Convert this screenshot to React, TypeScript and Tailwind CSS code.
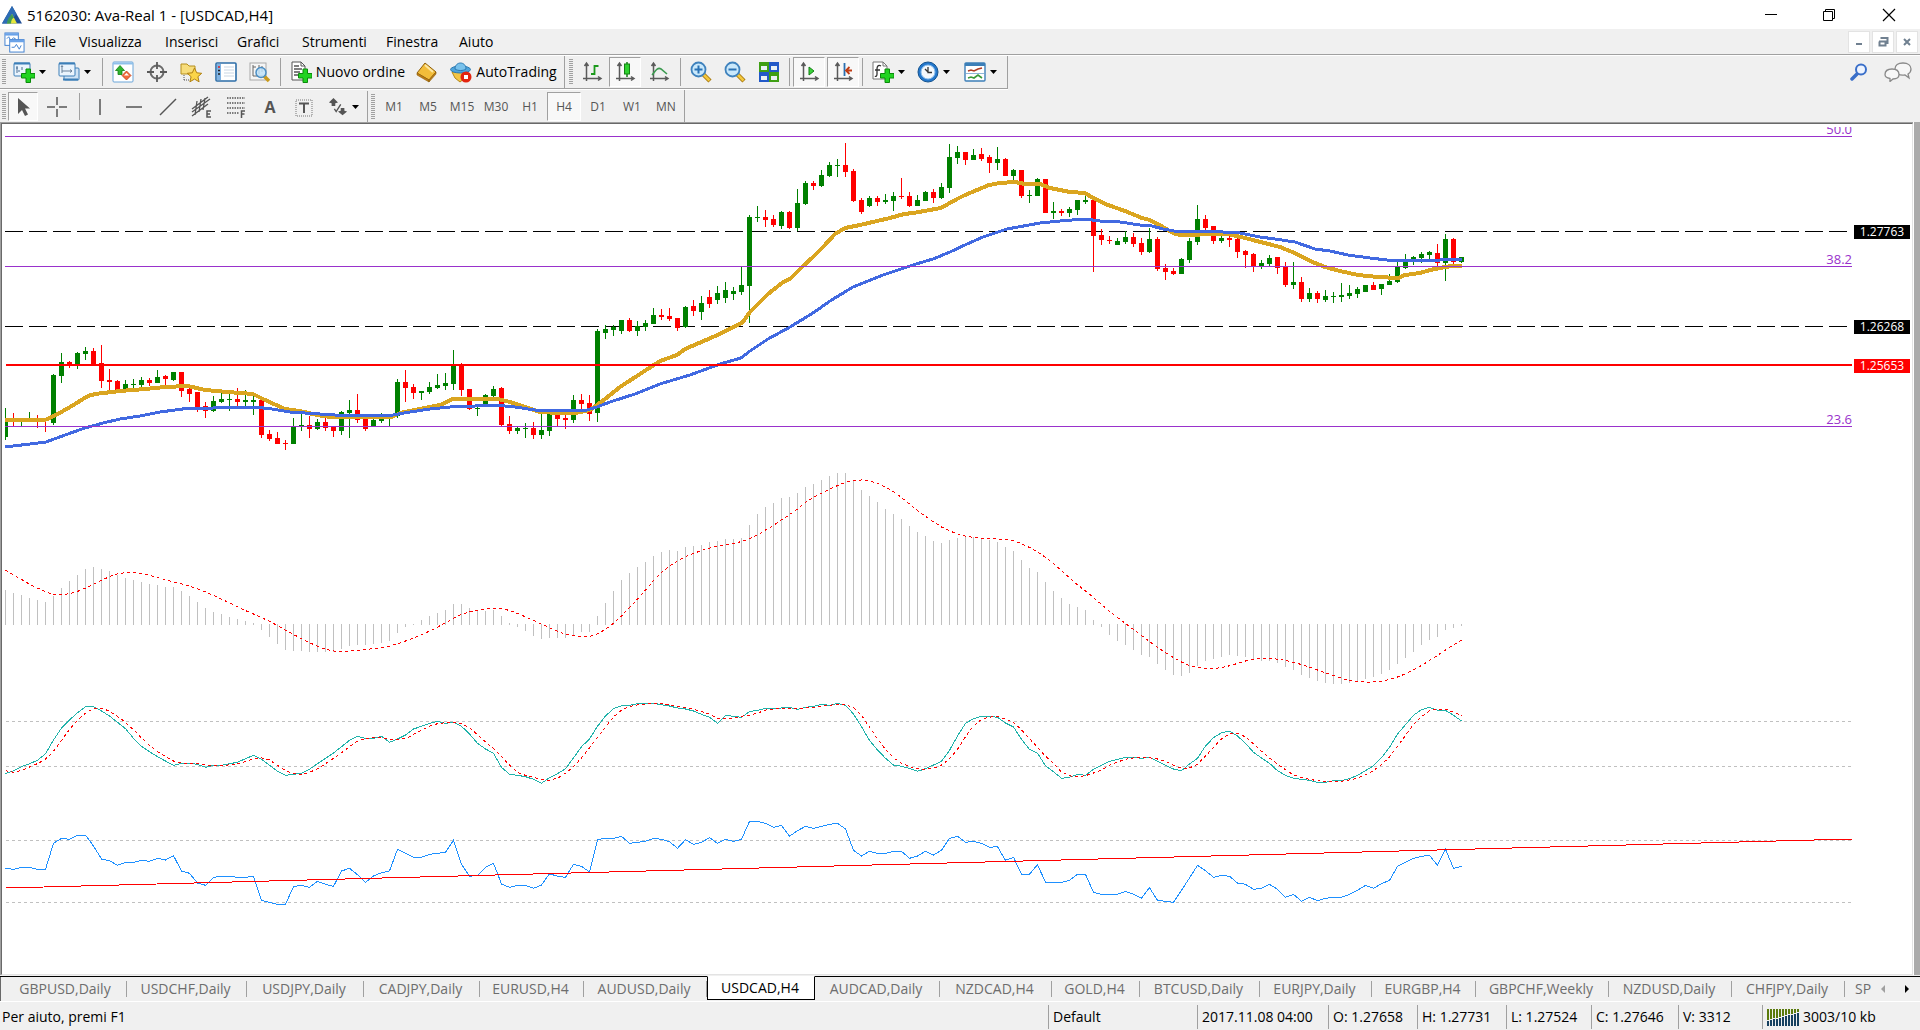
import type { ReactNode } from "react";
import clsx from "clsx";

type Candle = [high: number, top: number, bottom: number, low: number, up: 0 | 1];

const STEP = 8;
const PLOT_LEFT = 5;
const PLOT_TOP = 127;

const candles: Candle[] = [
  [408, 420, 437, 440, 1], [413, 419, 421, 426, 0], [419, 420, 421, 426, 1], [412, 419, 421, 422, 1],
  [415, 419, 421, 428, 0], [418, 420, 421, 432, 0], [374, 375, 423, 425, 1], [353, 362, 376, 383, 1],
  [361, 362, 365, 368, 0], [352, 353, 364, 369, 1], [347, 351, 354, 360, 1], [348, 351, 364, 364, 0],
  [345, 363, 381, 388, 0], [369, 380, 382, 390, 0], [380, 381, 390, 390, 0], [380, 384, 389, 390, 1],
  [379, 384, 385, 388, 1], [377, 380, 385, 387, 1], [378, 380, 383, 386, 0], [370, 377, 383, 383, 1],
  [375, 376, 379, 385, 0], [372, 372, 380, 381, 1], [372, 372, 391, 397, 0], [386, 389, 394, 402, 0],
  [392, 392, 408, 412, 0], [402, 406, 411, 418, 0], [396, 401, 411, 412, 1], [393, 399, 402, 403, 1],
  [393, 399, 400, 411, 1], [388, 399, 402, 406, 0], [390, 400, 402, 406, 1], [396, 400, 402, 415, 1],
  [400, 400, 435, 438, 0], [430, 434, 439, 441, 0], [432, 438, 444, 444, 0], [440, 443, 444, 450, 0],
  [418, 426, 444, 444, 1], [414, 425, 426, 431, 1], [416, 425, 429, 438, 0], [419, 422, 429, 430, 1],
  [416, 422, 428, 431, 0], [426, 427, 431, 437, 0], [411, 412, 431, 435, 1], [400, 410, 413, 438, 1],
  [394, 410, 420, 423, 0], [418, 418, 429, 431, 0], [419, 420, 426, 427, 1], [413, 418, 421, 423, 1],
  [415, 418, 419, 426, 1], [379, 382, 416, 418, 1], [370, 382, 388, 402, 0], [384, 387, 393, 399, 0],
  [391, 391, 393, 400, 1], [382, 387, 392, 394, 1], [374, 385, 388, 389, 1], [373, 383, 386, 390, 1],
  [350, 365, 384, 390, 1], [363, 365, 390, 396, 0], [389, 389, 409, 410, 0], [405, 408, 409, 416, 1],
  [394, 395, 405, 406, 1], [386, 389, 396, 397, 1], [387, 388, 425, 426, 0], [416, 424, 431, 434, 0],
  [426, 428, 431, 434, 1], [423, 428, 429, 438, 1], [422, 428, 435, 439, 0], [414, 430, 435, 439, 1],
  [413, 414, 431, 436, 1], [413, 415, 419, 426, 0], [415, 418, 420, 429, 0], [395, 400, 420, 423, 1],
  [394, 400, 404, 409, 0], [395, 403, 414, 421, 0], [329, 331, 413, 422, 1], [325, 329, 333, 339, 1],
  [325, 327, 330, 336, 1], [320, 320, 331, 334, 1], [318, 320, 331, 332, 0], [321, 326, 331, 336, 1],
  [320, 323, 327, 331, 1], [308, 315, 324, 324, 1], [309, 315, 317, 320, 0], [308, 316, 319, 321, 0],
  [318, 318, 328, 331, 0], [306, 307, 327, 328, 1], [300, 306, 311, 316, 0], [296, 303, 312, 320, 1],
  [290, 297, 304, 308, 0], [286, 293, 300, 304, 1], [282, 290, 298, 303, 1], [287, 291, 294, 300, 1],
  [266, 285, 292, 295, 1], [215, 217, 286, 323, 1], [206, 217, 218, 222, 1], [210, 217, 220, 227, 0],
  [215, 219, 225, 227, 0], [211, 212, 226, 229, 1], [211, 212, 228, 229, 0], [189, 203, 228, 231, 1],
  [181, 183, 204, 205, 1], [181, 183, 186, 190, 0], [170, 175, 186, 187, 1], [162, 165, 176, 177, 1],
  [159, 165, 166, 177, 1], [143, 165, 172, 177, 0], [169, 171, 201, 202, 0], [198, 200, 212, 214, 0],
  [196, 198, 206, 207, 1], [196, 198, 202, 206, 0], [194, 200, 202, 204, 1], [192, 196, 201, 211, 1],
  [178, 196, 197, 199, 0], [192, 196, 206, 207, 0], [195, 200, 206, 206, 1], [191, 192, 201, 201, 1],
  [189, 192, 198, 203, 0], [183, 187, 198, 199, 1], [144, 157, 188, 193, 1], [146, 152, 158, 164, 1],
  [152, 152, 160, 165, 0], [149, 155, 160, 160, 1], [148, 154, 159, 161, 0], [155, 157, 163, 173, 0],
  [147, 159, 163, 170, 1], [158, 159, 176, 176, 0], [169, 170, 176, 180, 1], [170, 170, 196, 198, 0],
  [190, 195, 196, 203, 1], [178, 179, 196, 196, 1], [179, 179, 213, 213, 0], [202, 211, 213, 219, 1],
  [209, 211, 213, 216, 0], [207, 209, 213, 217, 1], [200, 200, 210, 215, 1], [195, 200, 202, 204, 1],
  [200, 200, 236, 272, 0], [229, 235, 240, 245, 0], [236, 240, 241, 244, 0], [238, 241, 245, 245, 1],
  [231, 237, 242, 244, 1], [233, 237, 244, 247, 0], [238, 243, 252, 255, 0], [228, 239, 252, 253, 1],
  [237, 239, 269, 271, 0], [264, 268, 272, 280, 0], [268, 271, 274, 275, 0], [258, 259, 274, 274, 1],
  [238, 241, 260, 263, 1], [205, 219, 242, 245, 1], [215, 219, 228, 230, 0], [226, 226, 241, 244, 0],
  [236, 238, 241, 243, 1], [236, 238, 240, 247, 0], [238, 239, 252, 258, 0], [250, 251, 255, 268, 0],
  [253, 254, 266, 272, 0], [260, 263, 266, 269, 1], [255, 258, 264, 266, 1], [257, 257, 268, 274, 0],
  [262, 266, 285, 287, 0], [262, 282, 285, 289, 1], [277, 282, 299, 302, 0], [288, 293, 299, 302, 1],
  [291, 293, 299, 303, 0], [290, 296, 300, 302, 1], [292, 296, 297, 303, 1], [283, 295, 297, 302, 1],
  [285, 293, 296, 299, 1], [287, 289, 294, 298, 1], [285, 285, 292, 292, 1], [282, 285, 290, 290, 0],
  [284, 284, 289, 295, 1], [274, 281, 285, 285, 1], [262, 266, 282, 283, 1], [254, 262, 268, 269, 1],
  [256, 257, 260, 265, 1], [252, 254, 258, 263, 1], [251, 252, 255, 259, 1], [244, 253, 263, 266, 0],
  [234, 239, 263, 281, 1], [238, 239, 262, 264, 0], [257, 257, 262, 263, 1],
];

const fastMa = [
  [5, 420], [45, 420], [56, 415], [70, 407], [88, 396], [95, 394], [120, 391], [145, 389], [165, 387],
  [188, 386], [205, 390], [228, 392], [253, 394], [265, 400], [285, 409], [300, 411], [317, 415], [330, 417],
  [392, 417], [400, 413], [420, 409], [440, 405], [453, 399], [498, 399], [510, 402], [525, 407], [540, 412],
  [560, 413], [575, 413], [590, 410], [597, 405], [605, 399], [620, 387], [640, 374], [660, 361], [677, 355],
  [685, 349], [713, 337], [742, 323], [750, 312], [768, 294], [782, 283], [791, 278], [802, 267], [813, 257],
  [824, 246], [835, 234], [845, 228], [860, 225], [890, 218], [904, 214], [913, 213], [941, 208], [957, 199],
  [965, 195], [989, 185], [1000, 183], [1015, 182], [1025, 184], [1040, 184], [1050, 188], [1070, 192],
  [1085, 193], [1093, 198], [1108, 205], [1125, 211], [1142, 218], [1150, 220], [1163, 227], [1173, 233],
  [1180, 235], [1195, 235], [1205, 234], [1228, 234], [1245, 238], [1280, 247], [1297, 254], [1310, 261],
  [1325, 267], [1340, 271], [1358, 275], [1378, 277], [1398, 278], [1405, 275], [1420, 273], [1430, 270],
  [1445, 267], [1452, 266], [1462, 266],
];

const slowMa = [
  [5, 447], [30, 444], [46, 442], [65, 435], [85, 428], [103, 423], [120, 419], [140, 416], [160, 412],
  [175, 410], [190, 408], [213, 408], [230, 407], [255, 407], [272, 409], [290, 412], [320, 414], [335, 415],
  [393, 415], [410, 412], [430, 409], [450, 407], [475, 406], [495, 405], [515, 407], [535, 410], [560, 411],
  [587, 410], [597, 407], [610, 402], [635, 394], [660, 384], [690, 375], [720, 364], [741, 358], [750, 351],
  [768, 339], [790, 327], [813, 313], [830, 301], [853, 287], [883, 275], [913, 265], [933, 259], [950, 252],
  [967, 244], [983, 237], [1007, 229], [1040, 223], [1060, 221], [1085, 219], [1100, 221], [1120, 222],
  [1140, 225], [1152, 226], [1163, 229], [1180, 232], [1195, 231], [1205, 231], [1240, 233], [1260, 237],
  [1275, 239], [1295, 242], [1315, 249], [1330, 251], [1348, 255], [1370, 258], [1395, 261], [1415, 260],
  [1440, 260], [1448, 259], [1462, 259],
];

// bars before the first visible one, needed by the signal average
const macdHistory = [71, 67, 64, 57, 53, 50, 39];

const macd = [
  35, 32, 30, 27, 25, 23, 29, 37, 44, 50, 56, 58, 56, 54, 50, 47, 45, 43, 41, 40, 38, 38, 34, 29, 23, 17, 13, 11, 8,
  6, 4, 2, -6, -13, -20, -26, -27, -27, -28, -28, -28, -28, -25, -22, -21, -21, -20, -19, -17, -9, -3, 1, 5, 9, 12,
  15, 21, 21, 17, 14, 14, 15, 9, 2, -3, -7, -12, -15, -14, -14, -14, -11, -8, -8, 9, 22, 34, 45, 52, 58, 63, 69, 73,
  75, 74, 78, 79, 80, 83, 84, 86, 86, 87, 100, 111, 118, 122, 127, 128, 132, 138, 141, 145, 149, 152, 152, 144, 135,
  129, 123, 116, 111, 106, 99, 93, 89, 84, 82, 85, 87, 88, 88, 86, 85, 83, 78, 74, 65, 57, 53, 43, 34, 27, 21, 18,
  15, 5, -3, -11, -17, -21, -26, -31, -33, -40, -46, -51, -52, -49, -42, -37, -35, -33, -31, -32, -33, -35, -37, -37,
  -39, -43, -46, -51, -54, -57, -59, -60, -60, -59, -57, -55, -53, -50, -46, -40, -34, -28, -21, -16, -13, -6, -4, -2,
];

const stochastic = [
  941, 932, 920, 911, 901, 881, 840, 804, 780, 758, 740, 740, 753, 768, 787, 806, 835, 859, 875, 890, 903, 916, 910,
  910, 913, 922, 916, 916, 911, 907, 896, 886, 898, 916, 934, 946, 943, 940, 928, 911, 895, 879, 860, 841, 829, 835,
  835, 829, 847, 837, 825, 807, 799, 790, 784, 790, 787, 799, 822, 850, 867, 880, 922, 943, 946, 950, 958, 970, 953,
  941, 926, 894, 860, 837, 799, 768, 746, 737, 736, 731, 730, 730, 734, 738, 744, 747, 753, 763, 772, 790, 766, 769,
  772, 755, 751, 745, 747, 744, 742, 748, 742, 739, 733, 736, 730, 736, 762, 800, 841, 870, 895, 915, 919, 925, 934,
  926, 915, 904, 871, 828, 790, 776, 769, 769, 772, 789, 801, 838, 868, 880, 917, 935, 955, 952, 943, 946, 928, 916,
  904, 898, 892, 892, 895, 892, 904, 916, 927, 932, 912, 895, 858, 833, 818, 814, 828, 850, 877, 894, 910, 932, 946,
  955, 958, 961, 967, 967, 962, 962, 956, 946, 932, 917, 893, 862, 822, 794, 766, 749, 742, 751, 751, 766, 783,
];

const rsi = [
  1225, 1228, 1222, 1222, 1228, 1228, 1150, 1135, 1138, 1126, 1126, 1158, 1197, 1202, 1216, 1207, 1207, 1201, 1204,
  1195, 1200, 1187, 1233, 1240, 1269, 1276, 1252, 1249, 1249, 1252, 1252, 1249, 1321, 1327, 1333, 1333, 1280, 1276,
  1282, 1264, 1273, 1279, 1233, 1225, 1244, 1267, 1248, 1238, 1233, 1168, 1180, 1192, 1192, 1183, 1180, 1177, 1141,
  1213, 1249, 1246, 1222, 1210, 1272, 1282, 1276, 1276, 1285, 1275, 1241, 1249, 1252, 1213, 1219, 1236, 1139, 1135,
  1135, 1129, 1150, 1147, 1144, 1135, 1138, 1145, 1165, 1139, 1153, 1147, 1133, 1150, 1138, 1144, 1138, 1084, 1084,
  1090, 1102, 1096, 1129, 1112, 1099, 1105, 1099, 1093, 1090, 1107, 1171, 1188, 1174, 1180, 1180, 1174, 1174, 1195,
  1188, 1174, 1185, 1171, 1135, 1129, 1147, 1144, 1150, 1162, 1160, 1201, 1192, 1243, 1243, 1214, 1267, 1267, 1267,
  1261, 1243, 1243, 1297, 1303, 1303, 1303, 1294, 1303, 1315, 1283, 1321, 1324, 1327, 1291, 1254, 1216, 1232, 1252,
  1246, 1249, 1269, 1273, 1288, 1285, 1273, 1288, 1312, 1303, 1324, 1312, 1322, 1315, 1312, 1312, 1303, 1291, 1276,
  1285, 1271, 1261, 1219, 1207, 1195, 1189, 1186, 1216, 1168, 1225, 1219,
];

// simple moving average, one value for every full window
const sma = (values: number[], period: number) =>
  values
    .slice(period - 1)
    .map((_, i) => values.slice(i, i + period).reduce((a, b) => a + b, 0) / period);

const macdSignal = sma([...macdHistory, ...macd], 8);
const stochasticSignal = sma([917, 938, ...stochastic], 3);

const linePoints = (points: number[][]) => points.map(([x, y]) => `${x - PLOT_LEFT},${y}`).join(" ");
const seriesPoints = (values: number[], toY: (v: number) => number) =>
  values.map((v, i) => `${i * STEP + 0.5},${toY(v).toFixed(1)}`).join(" ");
const indicatorY = (v: number) => 460 + v / 3;

const fibLevels = [
  { label: "50.0", y: 136 },
  { label: "38.2", y: 266 },
  { label: "23.6", y: 426 },
];

const priceTags = [
  { price: "1.27763", className: "top-[98px] bg-black" },
  { price: "1.26268", className: "top-[193px] bg-black" },
  { price: "1.25653", className: "top-[232px] bg-[#ff0000]" },
];

const menus = [
  { label: "File", width: "w-[45px]" },
  { label: "Visualizza", width: "w-[86px]" },
  { label: "Inserisci", width: "w-[72px]" },
  { label: "Grafici", width: "w-[65px]" },
  { label: "Strumenti", width: "w-[84px]" },
  { label: "Finestra", width: "w-[73px]" },
  { label: "Aiuto", width: "w-[56px]" },
];

const timeframes = ["M1", "M5", "M15", "M30", "H1", "H4", "D1", "W1", "MN"];

const chartTabs = [
  { label: "GBPUSD,Daily", width: "w-[121px]" },
  { label: "USDCHF,Daily", width: "w-[120px]" },
  { label: "USDJPY,Daily", width: "w-[117px]" },
  { label: "CADJPY,Daily", width: "w-[116px]" },
  { label: "EURUSD,H4", width: "w-[104px]" },
  { label: "AUDUSD,Daily", width: "w-[123px]" },
  { label: "USDCAD,H4", width: "w-[108px]" },
  { label: "AUDCAD,Daily", width: "w-[125px]" },
  { label: "NZDCAD,H4", width: "w-[112px]" },
  { label: "GOLD,H4", width: "w-[88px]" },
  { label: "BTCUSD,Daily", width: "w-[120px]" },
  { label: "EURJPY,Daily", width: "w-[112px]" },
  { label: "EURGBP,H4", width: "w-[104px]" },
  { label: "GBPCHF,Weekly", width: "w-[133px]" },
  { label: "NZDUSD,Daily", width: "w-[123px]" },
  { label: "CHFJPY,Daily", width: "w-[113px]" },
];

const statusCells = [
  { text: "Default", width: "w-[149px]" },
  { text: "2017.11.08 04:00", width: "w-[131px]" },
  { text: "O: 1.27658", width: "w-[89px]" },
  { text: "H: 1.27731", width: "w-[89px]" },
  { text: "L: 1.27524", width: "w-[85px]" },
  { text: "C: 1.27646", width: "w-[87px]" },
  { text: "V: 3312", width: "w-[84px]" },
];

const Icon = ({ children, size = "size-[22px]" }: { children: ReactNode; size?: string }) => (
  <svg viewBox="0 0 22 22" className={clsx("shrink-0", size)} fill="none">
    {children}
  </svg>
);

const Plus = () => (
  <path d="M13 8h4.500v4.500H22V17h-4.500v4.500H13V17H8.500v-4.500H13z" fill="#22d322" stroke="#0b8a0b" />
);

const Axes = () => (
  <path d="M5.500 3v17M2 17.500h17M3.500 5l2-3 2 3M17 15.500l3 2-3 2" stroke="#5a5a5a" strokeWidth="1.500" />
);

const Magnifier = ({ plus }: { plus?: boolean }) => (
  <Icon>
    <path d="M13 13l7 7" stroke="#a87a10" strokeWidth="4.500" />
    <path d="M13 13l6.500 6.500" stroke="#f4c83c" strokeWidth="2.500" />
    <circle cx="8.500" cy="8.500" r="7" fill="#c9e8fb" stroke="#3f82bd" strokeWidth="1.800" />
    <path d={plus ? "M8.500 4.500v8M4.500 8.500h8" : "M4.500 8.500h8"} stroke="#2a72b5" strokeWidth="2" />
  </Icon>
);

const Caret = () => (
  <svg viewBox="0 0 7 4" className="h-1 w-[7px] shrink-0">
    <path d="M0 0h7L3.500 4z" fill="#000" />
  </svg>
);

const Grip = () => (
  <div className="mx-[2px] my-[3px] w-1 shrink-0 bg-[repeating-linear-gradient(to_bottom,#a0a0a0_0_1px,#f0f0f0_1px_2px)]" />
);

const Separator = () => <div className="mx-[3px] my-[2px] w-px shrink-0 bg-[#a0a0a0]" />;

type ToolProps = { label: string; width?: string; active?: boolean; text?: boolean; children: ReactNode };

const Tool = ({ label, width = "w-[34px]", active, text, children }: ToolProps) => (
  <button
    type="button"
    aria-label={text ? undefined : label}
    aria-pressed={active}
    className={clsx(
      "my-px flex shrink-0 items-center justify-center gap-1",
      width,
      active && "border border-t-[#a0a0a0] border-r-white border-b-white border-l-[#a0a0a0] bg-[#f8f8f8]"
    )}
  >
    {children}
  </button>
);

const StandardToolbar = () => (
  <div className="flex h-[33px] w-fit border-r border-b border-[#a0a0a0]">
    <Grip />
    <Tool label="Nuovo grafico" width="w-[42px]">
      <Icon>
        <rect x="1" y="2" width="16" height="13" rx="1" fill="#eaf4fd" stroke="#3c7fb8" />
        <path d="M1 2.500h16" stroke="#3c7fb8" strokeWidth="2" />
        <path d="M4 5v7M3 7h2M5 10h2M9 6v3" stroke="#4a6f92" />
        <Plus />
      </Icon>
      <Caret />
    </Tool>
    <Tool label="Profili" width="w-[49px]">
      <Icon>
        <rect x="6" y="7" width="15" height="12" rx="1" fill="#cfe3f5" stroke="#3c7fb8" />
        <rect x="1" y="2" width="16" height="13" rx="1" fill="#eaf4fd" stroke="#3c7fb8" />
        <path d="M1 2.500h16" stroke="#3c7fb8" strokeWidth="2" />
        <path d="M4 5v7M4 10h10M5 6l-1-1.500L3 6M12 8.500l2 1.500-2 1.500" stroke="#6a8199" />
        <path d="M5 18.500h15" stroke="#3c7fb8" strokeWidth="2" />
      </Icon>
      <Caret />
    </Tool>
    <Separator />
    <Tool label="Market Watch">
      <Icon>
        <rect x="1" y="1" width="20" height="20" rx="1" fill="#fff" stroke="#6aa5d8" />
        <path d="M1 2.500h20" stroke="#8ec0ea" strokeWidth="2" />
        <path d="M8 4.500l4.500 5H10v4H6v-4H3.500z" fill="#2fb52f" stroke="#138013" strokeWidth=".8" />
        <path d="M14.500 10l4.500 4.500-4.500 4.500-4.500-4.500z" fill="#f26a3c" stroke="#c03c14" strokeWidth=".8" />
        <path d="M14.500 12l2.500 2.500h-5z" fill="#fff" />
      </Icon>
    </Tool>
    <Tool label="Finestra dati">
      <Icon>
        <circle cx="11" cy="11" r="6.500" stroke="#6b6b6b" strokeWidth="2" />
        <path d="M11 1v7M11 14v7M1 11h7M14 11h7" stroke="#5a5a5a" strokeWidth="1.800" />
      </Icon>
    </Tool>
    <Tool label="Navigatore">
      <Icon>
        <path d="M1 3h6l2 2h6v8H1z" fill="#f7dd7c" stroke="#b58f1e" />
        <path d="M4 14v6M4 19h5" stroke="#555" strokeDasharray="1 1" />
        <path d="M14.500 7l2.200 4.800 5 .5-3.800 3.400 1.200 5.100-4.600-2.700-4.600 2.700 1.200-5.100-3.800-3.400 5-.5z" fill="#fbd549" stroke="#b08010" />
      </Icon>
    </Tool>
    <Tool label="Terminale" width="w-[35px]">
      <Icon>
        <rect x="1" y="2" width="20" height="18" rx="1" fill="#fff" stroke="#2d6ea8" strokeWidth="1.600" />
        <rect x="2" y="3" width="4" height="16" fill="#7fb2e2" />
        <path d="M9 6h10M9 9h10M9 12h10M9 15h10" stroke="#c9d6e3" />
        <path d="M3 6h2" stroke="#e02020" strokeWidth="1.500" />
        <path d="M3 9.500h2M3 13h2" stroke="#222" strokeWidth="1.500" />
      </Icon>
    </Tool>
    <Tool label="Tester strategia">
      <Icon>
        <rect x="1" y="2" width="16" height="17" fill="#f5f5f5" stroke="#a8a8a8" />
        <path d="M4 4v11M4 6h3M10 4v9M13 5v6M4 15h10" stroke="#666" />
        <path d="M15 15l5 5" stroke="#c99a1d" strokeWidth="3.500" />
        <circle cx="12" cy="11.500" r="5" fill="#bfe2f8" fillOpacity=".85" stroke="#4b8ec4" strokeWidth="1.500" />
      </Icon>
    </Tool>
    <Separator />
    <Tool label="Nuovo ordine" width="w-[127px]" text>
      <Icon>
        <path d="M2 1h9l4 4v14H2z" fill="#fff" stroke="#555" />
        <path d="M11 1v4h4" stroke="#555" />
        <path d="M4 5h5M4 8h8M4 11h6M4 14h4" stroke="#555" strokeWidth="1.500" />
        <Plus />
      </Icon>
      <span>Nuovo ordine</span>
    </Tool>
    <Tool label="MetaEditor" width="w-[32px]">
      <Icon>
        <path d="M9 2l11 9-7 8L1 12z" fill="#f2bd3a" stroke="#8f5f0c" />
        <path d="M1 12l12 7v2L1 14zM13 19l7-8v2l-7 8z" fill="#c07e14" stroke="#8f5f0c" strokeWidth=".6" />
        <path d="M9 4l8 7" stroke="#fde7a2" strokeWidth="2" />
      </Icon>
    </Tool>
    <Tool label="AutoTrading" width="w-[121px]" text>
      <Icon>
        <path d="M2 11h16l-3 6-5 4-5-4z" fill="#f3c545" stroke="#b38618" />
        <ellipse cx="10.500" cy="8.500" rx="10" ry="3.500" fill="#4da4dc" stroke="#2c79b0" />
        <path d="M5 8c0-8 11-8 11 0-3 2-8 2-11 0z" fill="#79c2ec" stroke="#2c79b0" />
        <circle cx="16" cy="16" r="5.500" fill="#e3250f" />
        <rect x="14" y="14" width="4" height="4" fill="#fff" />
      </Icon>
      <span>AutoTrading</span>
    </Tool>
    <div className="w-px bg-[#a0a0a0]" />
    <div className="w-[2px]" />
    <Grip />
    <Tool label="Grafico a barre">
      <Icon>
        <Axes />
        <path d="M13.500 4v10M13.500 5h4M10 13h3.500" stroke="#1c9a1c" strokeWidth="1.800" />
      </Icon>
    </Tool>
    <Tool label="Grafico a candele" width="w-[32px]" active>
      <Icon>
        <Axes />
        <path d="M13 1v15" stroke="#138013" strokeWidth="1.500" />
        <rect x="10.500" y="3" width="5" height="10" fill="#2fd32f" stroke="#138013" />
      </Icon>
    </Tool>
    <Tool label="Grafico a linea" width="w-[36px]">
      <Icon>
        <Axes />
        <path d="M4 14c4-5 6-8 9-6l6 5" stroke="#3c9a50" strokeWidth="1.600" />
      </Icon>
    </Tool>
    <Separator />
    <Tool label="Ingrandisci">
      <Magnifier plus />
    </Tool>
    <Tool label="Riduci">
      <Magnifier />
    </Tool>
    <Tool label="Affianca finestre">
      <Icon>
        <path d="M1 1h10v10H1zM11 11h10v10H11z" fill="#3f9f14" />
        <path d="M11 1h10v10H11zM1 11h10v10H1z" fill="#2259c8" />
        <path d="M3 5h6v4H3zM13 5h6v4h-6zM3 15h6v4H3zM13 15h6v4h-6z" fill="#e9f2f5" />
      </Icon>
    </Tool>
    <Separator />
    <Tool label="Scorrimento automatico" width="w-[32px]" active>
      <Icon>
        <Axes />
        <path d="M11 6v8l5-4z" fill="#3bd33b" stroke="#138013" />
      </Icon>
    </Tool>
    <div className="w-[2px]" />
    <Tool label="Spostamento grafico" width="w-[32px]" active>
      <Icon>
        <Axes />
        <path d="M12.500 2v13" stroke="#2a6fb0" strokeWidth="1.800" />
        <path d="M14 9.500h6M17.500 6L14 9.500l3.500 3.500" stroke="#c03c14" strokeWidth="1.800" />
      </Icon>
    </Tool>
    <Separator />
    <Tool label="Indicatori" width="w-[44px]">
      <Icon>
        <path d="M1 1h10l4 4v13H1z" fill="#fff" stroke="#777" />
        <path d="M11 1v4h4" stroke="#777" />
        <path d="M9 5c-3-2-4 1-4 3v5c0 2-1 3-2 2M3 9h5" stroke="#333" strokeWidth="1.300" />
        <Plus />
      </Icon>
      <Caret />
    </Tool>
    <Tool label="Periodi" width="w-[47px]">
      <Icon>
        <circle cx="11" cy="11" r="10" fill="#2477cc" stroke="#14538f" />
        <circle cx="11" cy="11" r="7" fill="#f4f8fc" stroke="#8cc0ee" />
        <path d="M11 6v5.500h4M8 8l3 3" stroke="#333" strokeWidth="1.300" />
      </Icon>
      <Caret />
    </Tool>
    <Tool label="Modelli" width="w-[46px]">
      <Icon>
        <rect x="1" y="2" width="20" height="18" rx="1" fill="#fff" stroke="#3c7fb8" strokeWidth="1.400" />
        <path d="M1 3.500h20" stroke="#3c7fb8" strokeWidth="3" />
        <path d="M4 10l3-1 3 1 4-2 4-1" stroke="#b03c24" strokeWidth="1.600" />
        <path d="M2 12.500h18" stroke="#8fb6d8" />
        <path d="M4 17l3-1 3 1 4-3 4 3" stroke="#3a9a3a" strokeWidth="1.600" />
      </Icon>
      <Caret />
    </Tool>
    <div className="w-1" />
  </div>
);

const DrawingToolbar = () => (
  <div className="flex h-8 w-fit border-r border-[#a0a0a0] pt-px text-[#555]">
    <Grip />
    <Tool label="Cursore" width="w-[30px]" active>
      <Icon>
        <path d="M6 2v16l4-4 3 6 3-1.500-3-6h5z" fill="#555" />
      </Icon>
    </Tool>
    <Tool label="Mirino" width="w-[38px]">
      <Icon>
        <path d="M11 1v8M11 13v8M1 11h8M13 11h8" stroke="#555" strokeWidth="1.500" />
      </Icon>
    </Tool>
    <Separator />
    <Tool label="Linea verticale">
      <Icon>
        <path d="M11 3v16" stroke="#555" strokeWidth="1.500" />
      </Icon>
    </Tool>
    <Tool label="Linea orizzontale">
      <Icon>
        <path d="M3 11h16" stroke="#555" strokeWidth="1.500" />
      </Icon>
    </Tool>
    <Tool label="Linea di tendenza">
      <Icon>
        <path d="M3 19L19 3" stroke="#555" strokeWidth="1.500" />
      </Icon>
    </Tool>
    <Tool label="Canale equidistante">
      <Icon>
        <path d="M1 13L17 1M1 20L17 8M6 5l-2 14M10 3L8 16M14 2l-2 12M1 16L19 3" stroke="#555" strokeWidth="1.300" />
        <path d="M20 15h-4v6h4M16 18h3" stroke="#555" strokeWidth="1.500" />
      </Icon>
    </Tool>
    <Tool label="Ritracciamento di Fibonacci">
      <Icon>
        <path d="M2 2h18M2 7h18M2 12h18M2 17h12" stroke="#555" strokeWidth="1.500" strokeDasharray="1.500 1" />
        <path d="M20 15h-3.500v7M16.500 18h3" stroke="#555" strokeWidth="1.500" />
      </Icon>
    </Tool>
    <Tool label="Testo" text>
      <span className="text-base font-bold">A</span>
    </Tool>
    <Tool label="Etichetta di testo">
      <Icon>
        <rect x="3" y="4" width="16" height="16" stroke="#777" strokeDasharray="1 1" />
        <path d="M6 7.500h10M11 7v10" stroke="#555" strokeWidth="2" />
      </Icon>
    </Tool>
    <Tool label="Frecce" width="w-[44px]">
      <Icon size="size-5">
        <path d="M6 1l5 5-3 1v3H4V7L1 6zM16 20l-5-4 3-1v-3h4v3l3 1z" fill="#555" />
        <path d="M7 13l2 3 5-8" stroke="#555" strokeWidth="1.500" />
      </Icon>
      <Caret />
    </Tool>
    <div className="w-[2px]" />
    <div className="w-px bg-[#a0a0a0]" />
    <div className="w-px" />
    <Grip />
    {timeframes.map((tf) => (
      <Tool key={tf} label={tf} active={tf === "H4"} text>
        <span className="text-xs font-medium">{tf}</span>
      </Tool>
    ))}
    <div className="w-px" />
  </div>
);

const TitleBar = () => (
  <header className="flex h-[29px] shrink-0 items-center bg-white pl-[2px]">
    <svg viewBox="0 0 20 20" className="size-5">
      <path d="M10 1l10 17.500H0z" fill="#1f4e96" />
      <path d="M10 1l4.500 8-8 9.500H0z" fill="#2d6cb5" />
      <path d="M10 9l5 9.500H5z" fill="#e6e83c" />
      <path d="M10 9c-3 3-5 6-5 9.500h4c0-3 1-5 3-6z" fill="#3f9a58" />
    </svg>
    <h1 className="ml-[5px] flex-1 text-[15px]">5162030: Ava-Real 1 - [USDCAD,H4]</h1>
    <button type="button" aria-label="Riduci a icona" className="flex w-[58px] justify-center">
      <svg viewBox="0 0 14 14" className="size-[14px]">
        <path d="M1 6.500h12" stroke="#000" />
      </svg>
    </button>
    <button type="button" aria-label="Ripristina" className="flex w-[58px] justify-center">
      <svg viewBox="0 0 14 14" className="size-[14px]" fill="none">
        <path d="M1.500 3.500h9v9h-9zM3.500 3V1.500h9v9H11" stroke="#000" />
      </svg>
    </button>
    <button type="button" aria-label="Chiudi" className="flex w-[62px] justify-center">
      <svg viewBox="0 0 14 14" className="size-[14px]">
        <path d="M1 1l12 12M13 1L1 13" stroke="#000" strokeWidth="1.200" />
      </svg>
    </button>
  </header>
);

const childControls = [
  { label: "Riduci grafico", d: "M4 9h6" },
  { label: "Ripristina grafico", d: "M5.500 4V3h6v5H10M3 6.500h6.500v4H3.500v-4" },
  { label: "Chiudi grafico", d: "M4 4l6 6M10 4l-6 6" },
];

const MenuBar = () => (
  <nav className="flex h-[27px] shrink-0 items-center border-b border-white pl-1 shadow-[inset_0_-1px_0_#a0a0a0]">
    <Icon size="size-[21px]">
      <rect x="1" y="1" width="14" height="13" fill="#fff" stroke="#3f7fd0" />
      <path d="M1 2.500h14" stroke="#6aa2e8" strokeWidth="2.500" />
      <path d="M3 7l2-2 2 4 3-3 3 2" stroke="#3f7fd0" />
      <rect x="6" y="8" width="15" height="13" fill="#fff" stroke="#3f7fd0" />
      <path d="M6 9.500h15" stroke="#6aa2e8" strokeWidth="2.500" />
      <path d="M8 16h3l2-3 3 5 2-4" stroke="#3f7fd0" />
    </Icon>
    <div className="ml-[-2px] flex flex-1">
      {menus.map((menu) => (
        <button key={menu.label} type="button" className={clsx("shrink-0 pl-[11px] text-left", menu.width)}>
          {menu.label}
        </button>
      ))}
    </div>
    <div className="flex gap-[2px] pr-[2px]">
      {childControls.map((control) => (
        <button
          key={control.label}
          type="button"
          aria-label={control.label}
          className="flex size-[22px] items-center justify-center border border-[#e3e3e3] bg-white"
        >
          <svg viewBox="0 0 14 14" className="size-[14px]" fill="none">
            <path d={control.d} stroke="#708090" strokeWidth="2" />
          </svg>
        </button>
      ))}
    </div>
  </nav>
);

const Levels = ({ ys }: { ys: number[] }) => (
  <>
    {ys.map((y) => (
      <line key={y} x1="1" x2="100%" y1={y + 0.5} y2={y + 0.5} stroke="#c0c0c0" strokeDasharray="3 3" />
    ))}
  </>
);

const Plot = () => (
  <svg className="h-full min-w-0 flex-1" fill="none" shapeRendering="crispEdges" role="img" aria-label="USDCAD,H4">
    <g transform={`translate(0 ${-PLOT_TOP})`}>
      {[231, 326].map((y) => (
        <line key={y} x1="0" x2="100%" y1={y + 0.5} y2={y + 0.5} stroke="#000" strokeDasharray="18 6" />
      ))}
      {candles.map(([high, top, bottom, low, up], i) => (
        <g key={i} fill={up ? "#008000" : "#ff0000"}>
          <rect x={i * STEP} y={high} width="1" height={low - high} />
          <rect x={i * STEP - 2} y={top} width="5" height={bottom - top} />
        </g>
      ))}
      <polyline points={linePoints(fastMa)} stroke="#daa520" strokeWidth="4" strokeLinejoin="round" />
      <polyline points={linePoints(slowMa)} stroke="#4169e1" strokeWidth="3" strokeLinejoin="round" />
      {fibLevels.map(({ label, y }) => (
        <g key={label}>
          <line x1="0" x2="100%" y1={y + 0.5} y2={y + 0.5} stroke="#9932cc" />
          <text x="100%" y={y - 2} textAnchor="end" className="fill-[#9932cc] text-[13px]">
            {label}
          </text>
        </g>
      ))}
      <line x1="1" x2="100%" y1="365" y2="365" stroke="#ff0000" strokeWidth="2" />

      {macd.map((v, i) => (
        <rect key={i} x={i * STEP} y={v > 0 ? 625 - v : 624} width="1" height={Math.abs(v)} fill="#c0c0c0" />
      ))}
      <polyline points={seriesPoints(macdSignal, (v) => 624.5 - v)} stroke="#ff0000" strokeDasharray="3 3" />

      <Levels ys={[721, 766]} />
      <polyline points={seriesPoints(stochastic, indicatorY)} stroke="#20b2aa" />
      <polyline points={seriesPoints(stochasticSignal, indicatorY)} stroke="#ff0000" strokeDasharray="3 3" />

      <Levels ys={[840, 902]} />
      <polyline points={seriesPoints(rsi, indicatorY)} stroke="#1e90ff" />
      <line x1="1" x2="100%" y1="888" y2="839" stroke="#ff0000" />
    </g>
  </svg>
);

const ChartWindow = () => (
  <main className="flex min-h-0 flex-1 bg-white">
    <div className="flex min-w-0 flex-1 border-t border-l border-[#a0a0a0]">
      <div className="flex min-w-0 flex-1 border border-t-[#696969] border-r-[#e3e3e3] border-b-[#e3e3e3] border-l-[#696969] pt-[3px] pl-[3px]">
        <Plot />
        <div className="relative w-[60px] shrink-0 text-xs text-white">
          {priceTags.map((tag) => (
            <span
              key={tag.price}
              className={clsx("absolute left-[2px] flex h-[14px] w-14 items-center justify-center", tag.className)}
            >
              {tag.price}
            </span>
          ))}
        </div>
      </div>
    </div>
    <div className="ml-px w-[6px] bg-[#ababab]" />
  </main>
);

const ChartTabs = () => (
  <div className="mt-px flex h-[25px] shrink-0 border-t border-black">
    <div className="w-px bg-[#696969]" />
    <div role="tablist" className="flex min-w-0 flex-1 pl-[5px] text-[#6d6d6d]">
      {chartTabs.map((tab) => {
        const active = tab.label === "USDCAD,H4";
        return (
          <button
            key={tab.label}
            type="button"
            role="tab"
            aria-selected={active}
            className={clsx(
              "shrink-0 pr-[2px] text-center whitespace-nowrap",
              tab.width,
              active
                ? "-mt-px h-6 border border-t-white border-black bg-white text-black"
                : "my-1 flex items-center justify-center border-r border-[#a0a0a0]"
            )}
          >
            {tab.label}
          </button>
        );
      })}
      <button type="button" role="tab" aria-selected={false} className="shrink-0 pl-[10px] text-left">
        SP
      </button>
    </div>
    <button type="button" aria-label="Schede precedenti" className="flex w-5 items-center justify-center">
      <svg viewBox="0 0 4 8" className="h-2 w-1">
        <path d="M4 0v8L0 4z" fill="#a0a0a0" />
      </svg>
    </button>
    <button type="button" aria-label="Schede successive" className="flex w-[27px] items-center justify-center">
      <svg viewBox="0 0 4 8" className="h-2 w-1">
        <path d="M0 0v8l4-4z" fill="#000" />
      </svg>
    </button>
  </div>
);

const StatusBar = () => (
  <footer className="flex h-[29px] shrink-0 items-stretch border-t border-white pt-[3px] pb-px">
    <p className="flex flex-1 items-center pl-[2px]">Per aiuto, premi F1</p>
    {statusCells.map((cell) => (
      <p
        key={cell.text}
        className={clsx("flex shrink-0 items-center border-l border-[#a0a0a0] pl-1 whitespace-nowrap", cell.width)}
      >
        {cell.text}
      </p>
    ))}
    <p className="flex w-[158px] shrink-0 items-center gap-1 border-l border-[#a0a0a0] pl-1 whitespace-nowrap">
      <svg viewBox="0 0 32 17" className="h-[17px] w-8" shapeRendering="crispEdges">
        {[...Array(11)].map((_, i) => (
          <g key={i}>
            <rect x={i * 3} y="0" width="2" height={11 - i * 0.8} fill="#5a7a0c" />
            <rect x={i * 3} y={12 - i * 0.8} width="2" height={5 + i * 0.8} fill="#17405f" />
          </g>
        ))}
      </svg>
      3003/10 kb
    </p>
  </footer>
);

const App = () => (
  <div className="flex h-screen flex-col overflow-hidden bg-[#f0f0f0] font-['Open_Sans','Noto_Sans',sans-serif] text-sm leading-5 text-black">
    <TitleBar />
    <MenuBar />
    <div className="flex shrink-0 justify-between">
      <div>
        <StandardToolbar />
        <div className="h-px bg-white" />
        <DrawingToolbar />
      </div>
      <div className="flex h-8 items-center gap-4 pr-2">
        <button type="button" aria-label="Cerca">
          <svg viewBox="0 0 18 18" className="size-[18px]" fill="none">
            <path d="M7 11l-5 5" stroke="#3a6fc9" strokeWidth="3.500" strokeLinecap="round" />
            <circle cx="11" cy="6.500" r="5" fill="#eef4ff" stroke="#3a6fc9" strokeWidth="2" />
          </svg>
        </button>
        <button type="button" aria-label="Messaggi">
          <svg viewBox="0 0 28 20" className="h-5 w-7" stroke="#8a8a8a" strokeWidth="1.300" fill="#f7f7f7">
            <path d="M19 1c5 0 8 2.500 8 6 0 2-1 4-3 5l1 4-4-3c-6 1-10-2-10-6s3-6 8-6z" />
            <path d="M8 7c4 0 7 2 7 5.500S12 17 9 17l-3 2.500v-3C3 16 1 14.500 1 12.500 1 9 4 7 8 7z" />
          </svg>
        </button>
      </div>
    </div>
    <ChartWindow />
    <ChartTabs />
    <StatusBar />
  </div>
);

export default App;
